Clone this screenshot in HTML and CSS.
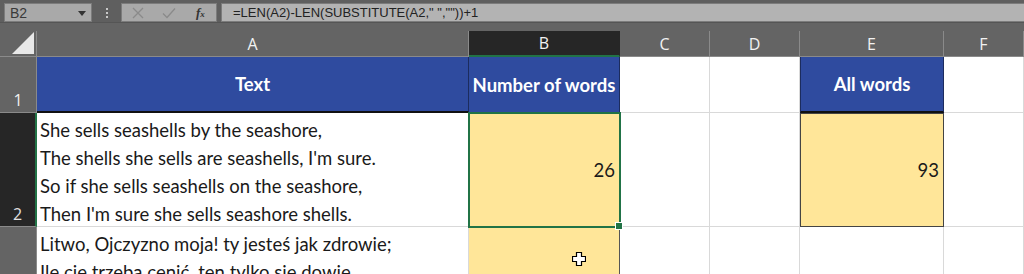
FILE: index.html
```html
<!DOCTYPE html>
<html>
<head>
<meta charset="utf-8">
<link rel="stylesheet" href="styles.css">
</head>
<body>
<div class="toolbar">
  <div class="namebox">
    <span>B2</span>
    <svg class="dd" width="8" height="5" viewBox="0 0 8 5"><path d="M0 0H8L4 5Z" fill="#333"/></svg>
  </div>
  <div class="grip"><i></i><i></i><i></i></div>
  <div class="fxbox">
    <svg width="12" height="12" viewBox="0 0 12 12"><path d="M1 1L11 11M11 1L1 11" stroke="#8a8a8a" stroke-width="1.3" fill="none"/></svg>
    <svg width="14" height="12" viewBox="0 0 14 12"><path d="M1 6.5L5 10.5L13 1.5" stroke="#8a8a8a" stroke-width="1.3" fill="none"/></svg>
    <span class="fx">f<small>x</small></span>
  </div>
  <div class="formula">=LEN(A2)-LEN(SUBSTITUTE(A2," ",""))+1</div>
</div>
<div class="grid">
  <div class="corner"><svg width="22" height="22" viewBox="0 0 22 22"><path d="M22 0V22H0Z" fill="#e8e8e8"/></svg></div>
  <div class="colhead">A</div>
  <div class="colhead sel">B</div>
  <div class="colhead">C</div>
  <div class="colhead">D</div>
  <div class="colhead">E</div>
  <div class="colhead">F</div>

  <div class="rowhead">1</div>
  <div class="cell head">Text</div>
  <div class="cell head headb">Number of words</div>
  <div class="cell"></div>
  <div class="cell"></div>
  <div class="cell head heade">All words</div>
  <div class="cell"></div>

  <div class="rowhead rsel">2</div>
  <div class="cell text">She sells seashells by the seashore,<br>The shells she sells are seashells, I'm sure.<br>So if she sells seashells on the seashore,<br>Then I'm sure she sells seashore shells.</div>
  <div class="cell yellow num active">26<span class="handle"></span></div>
  <div class="cell"></div>
  <div class="cell"></div>
  <div class="cell yellow num boxed">93</div>
  <div class="cell"></div>

  <div class="rowhead">3</div>
  <div class="cell text">Litwo, Ojczyzno moja! ty jesteś jak zdrowie;<br>Ile cię trzeba cenić, ten tylko się dowie,</div>
  <div class="cell yellow">
    <svg class="cursor" width="14" height="14" viewBox="0 0 14 14"><path d="M4.5 0.5H9.5V4.5H13.5V9.5H9.5V13.5H4.5V9.5H0.5V4.5H4.5Z" fill="#fff" stroke="#000" stroke-width="1.2"/></svg>
  </div>
  <div class="cell"></div>
  <div class="cell"></div>
  <div class="cell"></div>
  <div class="cell"></div>
</div>
</body>
</html>
```

FILE: styles.css
```css
html, body {
  margin: 0;
  padding: 0;
}
body {
  width: 1024px;
  height: 274px;
  overflow: hidden;
  background: #646464;
  font-family: "Liberation Sans", Arial, sans-serif;
}
.toolbar {
  height: 23px;
  box-sizing: border-box;
  padding: 3px 0 0 4px;
  display: flex;
  align-items: flex-start;
  border-bottom: 1px solid #555;
  background: #5f5f5f;
}
.namebox {
  width: 88px;
  height: 19px;
  box-sizing: border-box;
  background: #a9a9a9;
  border: 1px solid #7c7c7c;
  display: flex;
  align-items: center;
  justify-content: space-between;
  padding: 0 5px 0 5px;
  font-size: 14px;
  color: #3a3a3a;
}
.namebox .dd { margin-top: 1px; }
.grip {
  width: 29px;
  height: 19px;
  display: flex;
  flex-direction: column;
  align-items: center;
  justify-content: center;
  gap: 2px;
}
.grip i {
  display: block;
  width: 2px;
  height: 2px;
  background: #c8c8c8;
}
.fxbox {
  width: 96px;
  height: 19px;
  box-sizing: border-box;
  background: #a9a9a9;
  border: 1px solid #7c7c7c;
  display: flex;
  align-items: center;
  padding-left: 10px;
  gap: 18px;
}
.fx {
  font-family: "Liberation Serif", serif;
  font-style: italic;
  font-weight: bold;
  font-size: 13px;
  color: #333;
  margin-left: 2px;
}
.fx small { font-size: 9px; }
.formula {
  margin-left: 4px;
  flex: 1;
  height: 19px;
  box-sizing: border-box;
  background: #b3b3b3;
  border: 1px solid #7c7c7c;
  border-right: none;
  padding-left: 11px;
  font-size: 13px;
  line-height: 17px;
  color: #222;
}
.grid {
  margin-top: 8px;
  display: grid;
  grid-template-columns: 37px 432px 151px 90px 90px 144px 80px;
  grid-template-rows: 26px 56px 114px 114px;
}
.corner {
  background: #646464;
  border-bottom: 1px solid #8a8a8a;
  border-right: 1px solid #8a8a8a;
  display: flex;
  align-items: flex-end;
  justify-content: flex-end;
  padding: 0 2px 2px 0;
  box-sizing: border-box;
}
.colhead {
  background: #646464;
  color: #f2f2f2;
  font-family: "Open Sans", sans-serif;
  font-size: 16px;
  display: flex;
  align-items: center;
  justify-content: center;
  border-right: 1px solid #8a8a8a;
  border-bottom: 1px solid #8a8a8a;
  box-sizing: border-box;
}
.colhead.sel {
  background: #262626;
  border-bottom: 2px solid #217346;
  border-right-color: #262626;
}
.rowhead {
  background: #646464;
  color: #f0f0f0;
  font-family: "Open Sans", sans-serif;
  font-size: 16px;
  display: flex;
  align-items: flex-end;
  justify-content: center;
  padding-bottom: 1px;
  box-sizing: border-box;
  border-bottom: 1px solid #8a8a8a;
  border-right: 1px solid #8a8a8a;
}
.rowhead.rsel {
  background: #262626;
  border-right: 2px solid #217346;
  color: #e0e0e0;
}
.cell {
  background: #fff;
  border-right: 1px solid #d9d9d9;
  border-bottom: 1px solid #d9d9d9;
  box-sizing: border-box;
  font-family: Lato, "Open Sans", sans-serif;
  font-size: 18.5px;
  color: #1a1a1a;
}
.cell.head {
  background: #2f4b9f;
  color: #fff;
  font-weight: bold;
  display: flex;
  align-items: center;
  justify-content: center;
  border-right: 1px solid #1c2c5e;
  border-bottom: 2px solid #111;
}
.cell.headb {
  border-bottom: none;
}
.cell.heade {
  border-left: 1px solid #1c2c5e;
}
.cell.text {
  padding: 3px 0 0 3px;
  line-height: 28px;
  white-space: nowrap;
  overflow: hidden;
}
.cell.yellow {
  background: #ffe699;
  border-right: 1px solid #555;
  position: relative;
}
.cell.num {
  display: flex;
  align-items: center;
  justify-content: flex-end;
  padding-right: 4px;
}
.cell.active {
  outline: 2px solid #217346;
  outline-offset: -1px;
  z-index: 1;
}
.cell.boxed {
  border: 1px solid #444;
}
.handle {
  position: absolute;
  right: -4px;
  bottom: -4px;
  width: 6px;
  height: 6px;
  background: #217346;
  border: 1px solid #fff;
}
.cursor {
  position: absolute;
  left: 103px;
  top: 25px;
}
```
